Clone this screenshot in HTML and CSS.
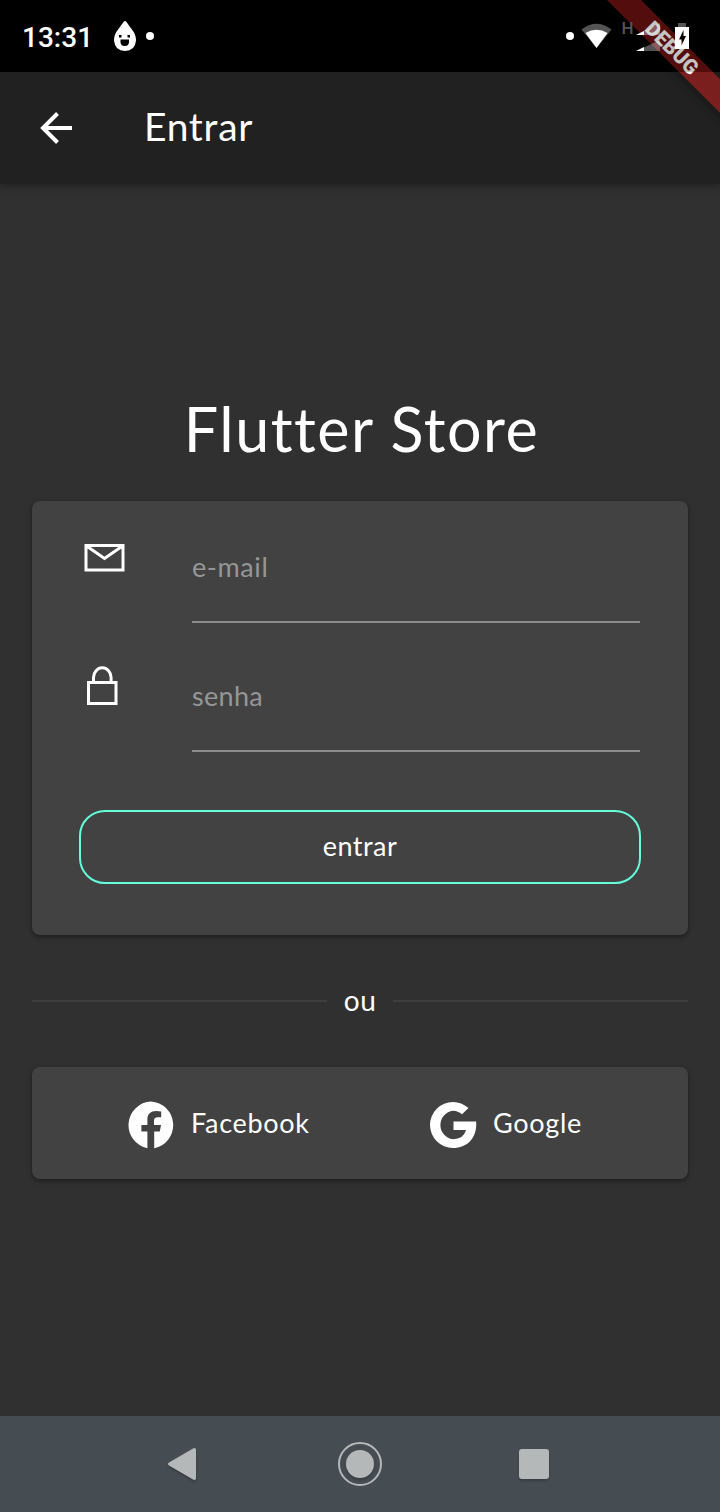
FILE: index.html
```html
<!DOCTYPE html>
<html lang="pt-BR">
<head>
<meta charset="utf-8">
<title>Entrar</title>
<link rel="stylesheet" href="styles.css">
</head>
<body>
<div class="screen">
  <div class="debug-corner"><div class="debug-banner"><span>DEBUG</span></div></div>
  <header class="status">
    <span class="clock">13:31</span>
    <svg class="drop" width="24" height="32" viewBox="0 0 24 32"><path fill="#fff" d="M10.500 2Q12 0 13.500 2Q17 7 20 11Q23 15 23 20.500Q22 31 12 31Q2 31 1 20.500Q1 15 4 11Z"/><path fill="#000" d="M6 15h2.500v2.500H6zM14.500 15h2.500v2.500h-2.500zM7.500 19.500h8.500v3q-.5 3.500-4.250 3.500T7.500 22.500z"/></svg>
    <i class="dot"></i>
    <svg class="signals" width="130" height="40" viewBox="0 0 130 40"><circle cx="10" cy="20" r="4" fill="#fff"/><path fill="#545454" d="M21.500 13.500Q36.500 2 51.500 13.500L36.500 32z"/><path fill="#fff" d="M25.500 17Q36.500 10.500 47.500 17L36.500 32z"/><text x="61.500" y="18" class="net">H</text><path fill="#fff" fill-opacity=".32" d="M76 19L100 7V19zM76 35L100 24V35z"/><path fill="#fff" d="M76 19L84 15V19zM76 35L84 31V35z"/><path fill="#545454" d="M118 7h8v4h-8z"/><path fill="#fff" fill-rule="evenodd" d="M115 11h14v22H115zM123.500 14L119 23.500H121.500V29.500L126 20H123.500z"/></svg>
  </header>
  <nav class="appbar">
    <svg width="32" height="32" viewBox="0 0 32 32"><path d="M32 16H3M17.500 1.500L3 16L17.500 30.500" fill="none" stroke="#fff" stroke-width="4"/></svg>
    <h1>Entrar</h1>
  </nav>
  <main>
    <h2>Flutter Store</h2>
    <form class="card login">
      <div class="row">
        <svg width="41" height="41" viewBox="0 0 41 41"><path d="M2 9.500h37v24.500H2zM2.500 10l18 12.500L38.500 10" fill="none" stroke="#fff" stroke-width="3"/></svg>
        <div class="field"><span class="mail">e-mail</span></div>
      </div>
      <div class="row">
        <svg width="41" height="41" viewBox="0 0 41 41"><path d="M4.500 16.500h27.500v21H4.500zM9.500 16v-4.500a8.800 9.700 0 0 1 17.600 0V16" fill="none" stroke="#fff" stroke-width="3"/></svg>
        <div class="field"><span class="pass">senha</span></div>
      </div>
      <button type="button" class="enter"><span>entrar</span></button>
    </form>
    <div class="divider"><i></i><span>ou</span><i></i></div>
    <section class="card social">
      <a class="fb"><svg width="48" height="48" viewBox="0 0 24 24"><path fill="#fff" d="M12 .25A11.800 11.800 0 0 0 10.200 23.600V15.250H7.200V12H10.200V9.200C10.200 6.400 11.900 4.950 14.500 4.950Q16 4.950 17.100 5.200V8.100H15.400C14 8.100 13.500 8.900 13.500 9.800V12H17L16.400 15.250H13.600V23.600A11.800 11.800 0 0 0 12 .25z"/></svg><span>Facebook</span></a>
      <a class="gg"><svg width="48" height="48" viewBox="0 0 48 48"><path fill="#fff" d="M24.500 20.500h22.600C48.500 36 39 47 24 47A23 23 0 0 1 24 1Q32.500 1 39.500 7L33 13.300Q29 9.800 24 9.800A14.300 14.300 0 0 0 24 38.200Q34.500 38.200 37 29H24.500z"/></svg><span>Google</span></a>
    </section>
  </main>
  <footer class="navbar">
    <svg width="720" height="96" viewBox="0 0 720 96"><g fill="#b4b8b9"><path d="M169 46.500L193.500 32.200Q196 31.500 196 34V62Q196 64.500 193.500 63.800L169 49.500Q167 48 169 46.500z"/><circle cx="360" cy="48" r="14"/><rect x="519" y="33" width="30" height="30" rx="3"/></g><circle cx="360" cy="48" r="21" fill="none" stroke="#b4b8b9" stroke-width="2"/></svg>
  </footer>
</div>
</body>
</html>
```
FILE: styles.css
```css
* { box-sizing: border-box; }
body { margin: 0; background: #303030; color: #fff; font-family: Lato, "Noto Sans", sans-serif; }
svg { display: block; flex: none; }
.screen { position: relative; width: 720px; height: 1512px; display: flex; flex-direction: column; overflow: hidden; background: #303030; }
.status { height: 72px; background: #000; display: flex; align-items: center; flex: none; padding-left: 22px; }
.clock { width: 91px; font: 500 28px/1 Roboto, sans-serif; padding-top: 3px; }
.dot { width: 8px; height: 8px; border-radius: 50%; background: #fff; margin-left: 9px; }
.signals { margin-left: 406px; position: relative; z-index: 3; }
.net { font: 500 17px Roboto, sans-serif; fill: #545454; }
.appbar { height: 112px; flex: none; display: flex; align-items: center; background: #212121; padding-left: 40px; box-shadow: 0 2px 8px rgba(0,0,0,.35); }
.appbar h1 { margin: -5px 0 0 72px; font-size: 39px; font-weight: 400; line-height: 48px; letter-spacing: .7px; }
.debug-corner { position: absolute; top: 0; right: 0; width: 180px; height: 180px; overflow: hidden; z-index: 2; }
.debug-corner::after { content: ""; position: absolute; top: 0; left: 0; width: 100%; height: 72px; background: rgba(0,0,0,.23); }
.debug-banner { position: absolute; left: 12px; top: 36px; width: 240px; height: 24px; background: rgba(183,28,28,.6); transform: rotate(45deg); box-shadow: 0 0 12px rgba(0,0,0,.5); text-align: center; font: 900 20.500px/24px Roboto, sans-serif; color: #fff; }
main { flex: 1; padding: 0 32px; }
h2 { margin: 205px 0 0; height: 80px; line-height: 80px; font-size: 61px; font-weight: 400; letter-spacing: 1.5px; padding-left: 3px; text-align: center; }
.card { background: #424242; border-radius: 8px; box-shadow: 0 2px 5px rgba(0,0,0,.42); }
.login { height: 434px; margin-top: 32px; padding: 0 47px; }
.row { display: flex; padding-left: 5px; height: 129px; }
.row > svg { margin-top: 35px; }
.row + .row > svg { margin-top: 36px; }
.field { height: 94px; margin: 28px 1px 0 67px; flex: 1; border-bottom: 2px solid #8c8c8c; color: #969696; font-size: 27px; line-height: 75px; }
.mail { letter-spacing: .6px; }
.pass { letter-spacing: .3px; }
.enter { display: block; width: 562px; height: 74px; margin-top: 51px; padding: 0 0 3px; border: 2px solid #64ffda; border-radius: 26px; background: none; color: #fff; font: 400 27px/1 Lato, sans-serif; letter-spacing: .5px; }
.divider { height: 132px; display: flex; align-items: center; justify-content: space-between; font-size: 27px; }
.divider span { font-size: 28px; letter-spacing: .5px; margin-top: -2px; }
.divider i { width: 295px; height: 2px; background: #3d3d3d; }
.social { height: 112px; display: flex; align-items: center; padding: 4px 0 0 95px; }
.social a { display: flex; align-items: center; font-size: 27px; letter-spacing: .7px; }
.social span { margin: -5px 0 0 16px; }
.fb { width: 302px; }
.gg { letter-spacing: .9px; }
.navbar { height: 96px; flex: none; background: #454d53; }
.navbar g { filter: drop-shadow(0 2px 1px rgba(0,0,0,.2)); }
```
